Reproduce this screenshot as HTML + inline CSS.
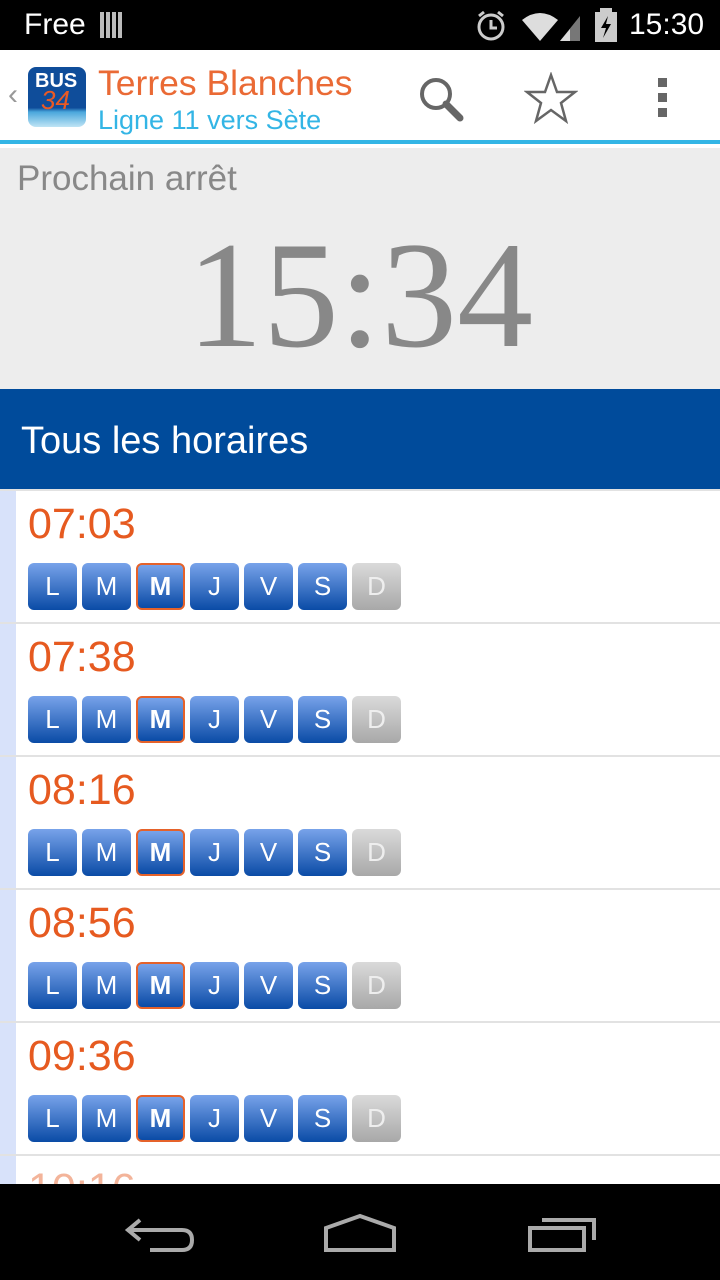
<!DOCTYPE html>
<html><head><meta charset="utf-8"><style>
*{margin:0;padding:0;box-sizing:border-box}
body{width:720px;height:1280px;overflow:hidden;background:#fff;font-family:"Liberation Sans",sans-serif;position:relative}
.sb{position:absolute;top:0;left:0;width:720px;height:50px;background:#000;color:#fff;font-size:30px}
.ab{position:absolute;top:50px;left:0;width:720px;height:94px;background:#fff;border-bottom:4px solid #33b5e5}
.next{position:absolute;top:148px;left:0;width:720px;height:241px;background:#ededed}
.hdr{position:absolute;top:389px;left:0;width:720px;height:100px;background:#004b9b;color:#fff;font-size:38px;padding:31px 0 0 21px}
.list{position:absolute;top:489px;left:0;width:720px;height:695px;overflow:hidden}
.row{position:absolute;left:0;width:720px;height:133px;border-top:2px solid #e2e2e2}
.row .strip{position:absolute;left:0;top:0;width:16px;height:133px;background:#d8e2fa}
.row .t{position:absolute;left:28px;top:9px;font-size:43px;color:#e65a20}
.b{position:absolute;top:72px;width:49px;height:47px;border-radius:6px;background:linear-gradient(#78a3ea,#0a4ba6);color:#fff;font-size:26px;text-align:center;line-height:47px}
.b.m{border:2px solid #e5622a;font-weight:bold;line-height:43px}
.b.d{background:linear-gradient(#dadada,#a8a8a8);color:#eee}
.nav{position:absolute;top:1184px;left:0;width:720px;height:96px;background:#000}
</style></head><body>
<div class="sb">
<div style="position:absolute;left:24px;top:8px;font-size:30px">Free</div>
<div style="position:absolute;left:100px;top:12px;width:24px;height:26px;background:repeating-linear-gradient(90deg,#bbb 0 4px,#000 4px 6px)"></div>
<svg style="position:absolute;left:474px;top:10px" width="34" height="32" viewBox="0 0 34 32"><circle cx="17" cy="17" r="12" fill="none" stroke="#ccc" stroke-width="3"/><path d="M17 10v8h6M5 6l5-4M29 6l-5-4" stroke="#ccc" stroke-width="3" fill="none"/></svg>
<svg style="position:absolute;left:520px;top:10px" width="64" height="32" viewBox="0 0 64 32"><path d="M2 10 Q20 -4 38 10 L20 31Z" fill="#ddd"/><path d="M40 31 L60 6 L60 31Z" fill="#777"/><path d="M40 31 L50 19 L50 31Z" fill="#ddd"/></svg>
<svg style="position:absolute;left:594px;top:8px" width="24" height="34" viewBox="0 0 24 34"><rect x="6" y="0" width="12" height="4" fill="#ccc"/><rect x="1" y="4" width="22" height="30" fill="#ccc"/><path d="M14 8 L7 20 L12 20 L9 30 L17 16 L12 16Z" fill="#000"/></svg>
<div style="position:absolute;left:629px;top:8px">15:30</div>
</div>
<div class="ab">
<div style="position:absolute;left:8px;top:28px;color:#999;font-size:30px">‹</div>
<div style="position:absolute;left:28px;top:17px;width:58px;height:60px;border-radius:8px;background:linear-gradient(#0f4d9a 68%,#4aa7dc 75%,#bfe4f5);overflow:hidden">
<div style="position:absolute;left:7px;top:3px;color:#fff;font-weight:bold;font-size:20px">BUS</div>
<div style="position:absolute;left:13px;top:18px;color:#ea5a24;font-style:italic;font-size:26px">34</div>
</div>
<div style="position:absolute;left:98px;top:13px;font-size:35.5px;color:#ea6a35">Terres Blanches</div>
<div style="position:absolute;left:98px;top:55px;font-size:27px;color:#33b5e5">Ligne 11 vers Sète</div>
<svg style="position:absolute;left:416px;top:24px" width="50" height="50" viewBox="0 0 50 50"><circle cx="20" cy="20" r="14" fill="none" stroke="#666" stroke-width="4"/><path d="M30 30 L44 44" stroke="#666" stroke-width="7" stroke-linecap="round"/></svg>
<svg style="position:absolute;left:524px;top:22px" width="54" height="52" viewBox="0 0 54 52"><path d="M27 3 L33 20 L51 20 L37 31 L42 49 L27 38 L12 49 L17 31 L3 20 L21 20Z" fill="none" stroke="#666" stroke-width="2.5"/></svg>
<div style="position:absolute;left:658px;top:28px;width:9px;height:9px;background:#666;box-shadow:0 15px 0 #666,0 30px 0 #666"></div>
</div>
<div class="next">
<div style="position:absolute;left:17px;top:11px;font-size:35px;color:#888">Prochain arrêt</div>
<div style="position:absolute;left:0;width:720px;top:72px;text-align:center;font-family:'Liberation Serif',serif;font-size:152px;color:#888;line-height:150px">15:34</div>
</div>
<div class="hdr">Tous les horaires</div>
<div class="list">
<div class="row" style="top:0"><div class="strip"></div><div class="t">07:03</div><div class="b" style="left:28px">L</div><div class="b" style="left:82px">M</div><div class="b m" style="left:136px">M</div><div class="b" style="left:190px">J</div><div class="b" style="left:244px">V</div><div class="b" style="left:298px">S</div><div class="b d" style="left:352px">D</div></div>
<div class="row" style="top:133px"><div class="strip"></div><div class="t">07:38</div><div class="b" style="left:28px">L</div><div class="b" style="left:82px">M</div><div class="b m" style="left:136px">M</div><div class="b" style="left:190px">J</div><div class="b" style="left:244px">V</div><div class="b" style="left:298px">S</div><div class="b d" style="left:352px">D</div></div>
<div class="row" style="top:266px"><div class="strip"></div><div class="t">08:16</div><div class="b" style="left:28px">L</div><div class="b" style="left:82px">M</div><div class="b m" style="left:136px">M</div><div class="b" style="left:190px">J</div><div class="b" style="left:244px">V</div><div class="b" style="left:298px">S</div><div class="b d" style="left:352px">D</div></div>
<div class="row" style="top:399px"><div class="strip"></div><div class="t">08:56</div><div class="b" style="left:28px">L</div><div class="b" style="left:82px">M</div><div class="b m" style="left:136px">M</div><div class="b" style="left:190px">J</div><div class="b" style="left:244px">V</div><div class="b" style="left:298px">S</div><div class="b d" style="left:352px">D</div></div>
<div class="row" style="top:532px"><div class="strip"></div><div class="t">09:36</div><div class="b" style="left:28px">L</div><div class="b" style="left:82px">M</div><div class="b m" style="left:136px">M</div><div class="b" style="left:190px">J</div><div class="b" style="left:244px">V</div><div class="b" style="left:298px">S</div><div class="b d" style="left:352px">D</div></div>
<div class="row" style="top:665px"><div class="strip"></div><div class="t" style="color:#f3b49a">10:16</div></div>
</div>
<div class="nav">
<svg style="position:absolute;left:124px;top:30px" width="72" height="40" viewBox="0 0 72 40"><path d="M16 6 L4 16 L16 26 M4 16 H58 Q68 16 68 26 Q68 36 58 36 H26" fill="none" stroke="#aaa" stroke-width="4"/></svg>
<svg style="position:absolute;left:322px;top:28px" width="76" height="42" viewBox="0 0 76 42"><path d="M4 38 V16 L38 4 L72 16 V38Z" fill="none" stroke="#aaa" stroke-width="4"/></svg>
<svg style="position:absolute;left:526px;top:30px" width="72" height="40" viewBox="0 0 72 40"><rect x="4" y="14" width="54" height="22" fill="none" stroke="#aaa" stroke-width="4"/><path d="M16 6 H68 V26" fill="none" stroke="#aaa" stroke-width="4"/></svg>
</div>
</body></html>
